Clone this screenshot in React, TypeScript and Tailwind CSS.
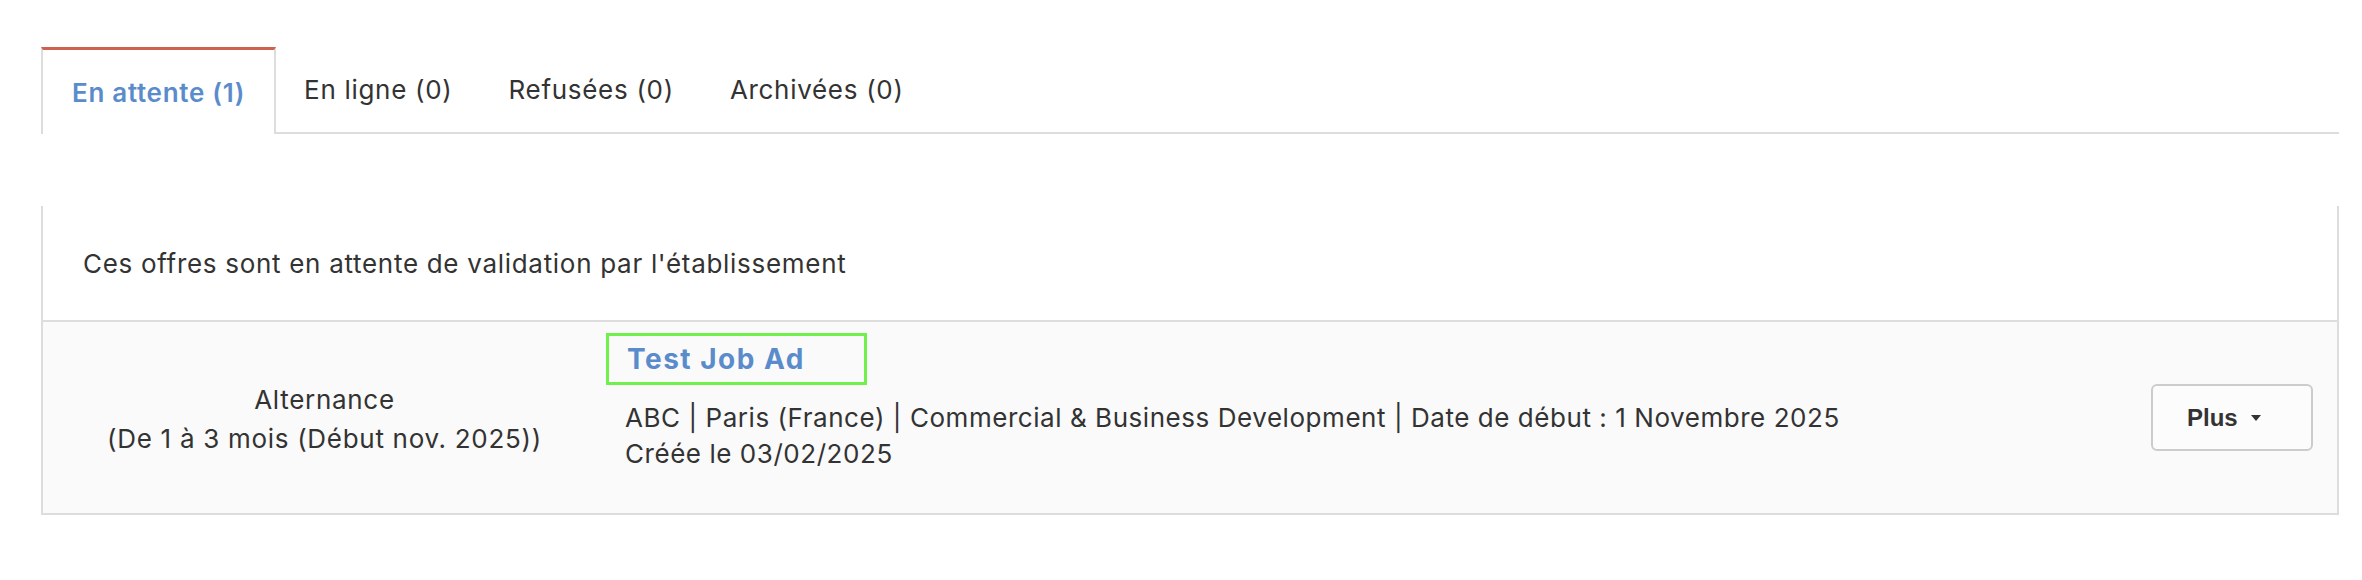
import React from "react";

const TABS = [
  { label: "En attente (1)", active: true },
  { label: "En ligne (0)", active: false },
  { label: "Refusées (0)", active: false },
  { label: "Archivées (0)", active: false },
];

const font = { fontFamily: "Inter, 'Noto Sans', sans-serif" };

export default function App() {
  return (
    <div className="w-[2362px] h-[580px] bg-white pl-[41px] pr-[23px] pt-[47px] text-[#333333] text-[26px] tracking-[0.7px]" style={font}>
      {/* onglets */}
      <div className="flex h-[87px] border-b-2 border-[#dddddd]">
        {TABS.map((t) =>
          t.active ? (
            <div
              key={t.label}
              className="flex items-center px-[29px] -mb-[2px] bg-white border-t-[3px] border-t-[#d0614f] border-x-2 border-x-[#dddddd] font-semibold text-[#5a8ccb]"
            >
              {t.label}
            </div>
          ) : (
            <div key={t.label} className="flex items-center px-[28px] text-[#333333]">
              {t.label}
            </div>
          )
        )}
      </div>

      {/* panneau */}
      <div className="mt-[72px] border-x-2 border-b-2 border-[#dddddd]">
        <div className="h-[116px] flex items-center pl-[40px] border-b-2 border-[#dddddd]">
          Ces offres sont en attente de validation par l'établissement
        </div>

        <div className="flex h-[191px] bg-[#fafafa]">
          <div className="w-[563px] flex flex-col items-center justify-center pt-[2px] leading-[39px] text-center">
            <div>Alternance</div>
            <div>(De 1 à 3 mois (Début nov. 2025))</div>
          </div>

          <div className="flex-1 pt-[11px]">
            <div className="w-[261px] h-[52px] border-[3px] border-[#6ff04b] flex items-center pl-[18px]">
              <a className="text-[28px] font-bold tracking-[1.5px] text-[#5a8ccb]">Test Job Ad</a>
            </div>
            <div className="mt-[15px] ml-[19px] leading-[36px] tracking-[0.55px]">
              <div>ABC | Paris (France) | Commercial &amp; Business Development | Date de début : 1 Novembre 2025</div>
              <div>Créée le 03/02/2025</div>
            </div>
          </div>

          <div className="flex items-center pr-[24px]">
            <button
              className="w-[162px] h-[67px] flex items-center pl-[34px] gap-[13px] border-2 border-[#cccccc] rounded-[6px] bg-[#fcfcfc] text-[24px] tracking-normal font-bold text-[#333333]"
              style={{ fontFamily: "'Liberation Sans', Arial, sans-serif" }}
            >
              Plus
              <svg width="10" height="6" viewBox="0 0 10 6">
                <path d="M0 0 L10 0 L5 6 Z" fill="#333333" />
              </svg>
            </button>
          </div>
        </div>
      </div>
    </div>
  );
}
